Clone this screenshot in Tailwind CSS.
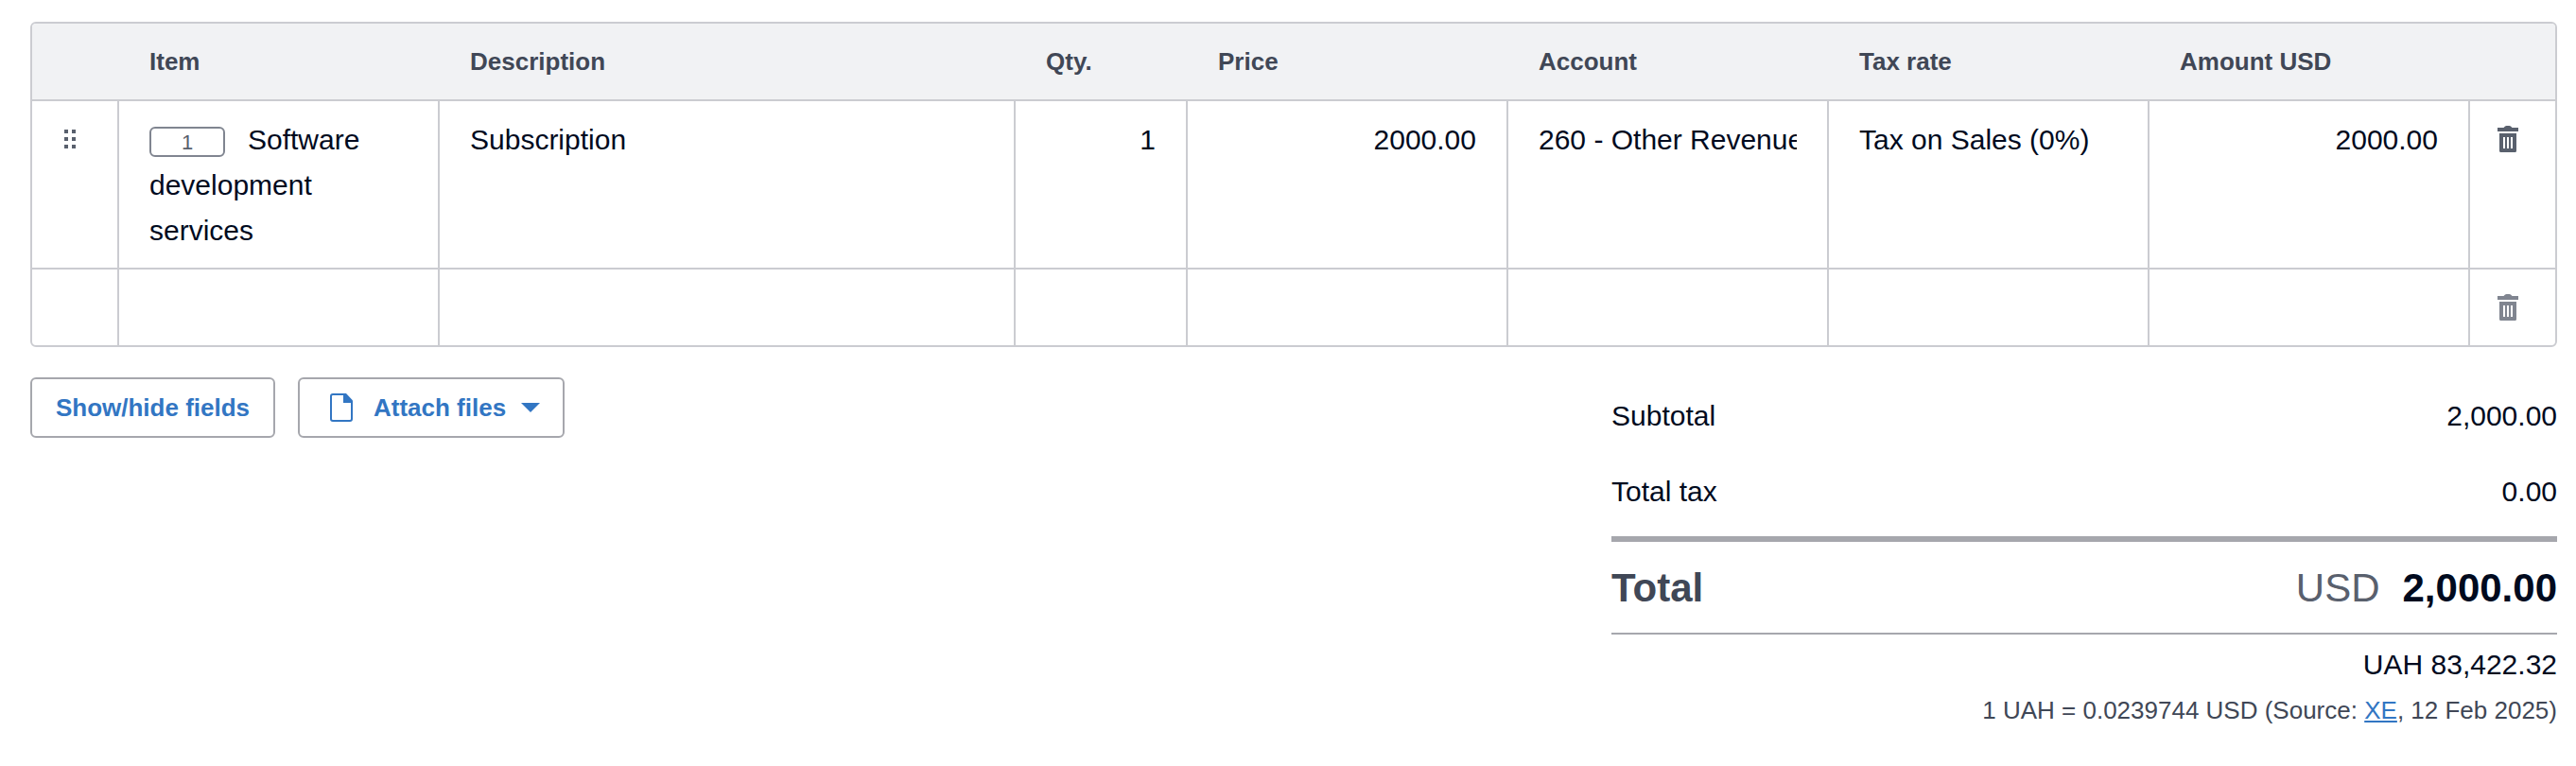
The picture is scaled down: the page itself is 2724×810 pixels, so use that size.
<!DOCTYPE html>
<html lang="en">
<head>
  <meta charset="UTF-8">
  <meta name="viewport" content="width=device-width, initial-scale=1.0">
  <title>Invoice line items</title>
  <script src="https://cdn.jsdelivr.net/npm/@tailwindcss/browser@4"></script>
</head>

<body class="bg-white pr-5 pl-8 pt-[23px] pb-6 font-['Liberation_Sans',Arial,sans-serif] text-[30px] leading-[48px] text-[#000a1e]">

  <!-- Line items -->
  <div class="overflow-hidden rounded-md border-2 border-[#cbccd1]">
    <table class="w-full table-fixed border-separate border-spacing-0">
      <colgroup>
        <col class="w-[92px]">
        <col class="w-[339px]">
        <col>
        <col class="w-[182px]">
        <col class="w-[339px]">
        <col class="w-[339px]">
        <col class="w-[339px]">
        <col class="w-[339px]">
        <col class="w-[90px]">
      </colgroup>
      <thead class="bg-[#f1f2f4] text-left text-[26px] text-[#404756]">
        <tr class="*:border-b-2 *:border-[#cbccd1] *:px-8 *:py-4 *:font-bold">
          <td></td>
          <th scope="col">Item</th>
          <th scope="col">Description</th>
          <th scope="col">Qty.</th>
          <th scope="col">Price</th>
          <th scope="col">Account</th>
          <th scope="col">Tax rate</th>
          <th scope="col">Amount USD</th>
          <td></td>
        </tr>
      </thead>
      <tbody>
        <tr class="align-top *:border-b-2 *:border-r-2 *:border-[#cbccd1] *:pt-[17px] *:pb-[15px]">
          <td>
            <button type="button" aria-label="Reorder line" class="flex h-[46px] w-full cursor-grab items-center justify-center pr-[10px]">
              <svg class="h-5 w-3 fill-[#59606d]" viewBox="0 0 12 20" shape-rendering="crispEdges">
                <path d="M0 0h4v4H0zM8 0h4v4H8zM0 8h4v4H0zM8 8h4v4H8zM0 16h4v4H0zM8 16h4v4H8z"/>
              </svg>
            </button>
          </td>
          <td class="px-8"><span class="mr-6 inline-block h-8 w-20 rounded-md border-2 border-[#808590] text-center align-middle text-[22px] leading-[30px] text-[#59606d]">1</span>Software development services</td>
          <td class="px-8">Subscription</td>
          <td class="px-8 text-right">1</td>
          <td class="px-8 text-right">2000.00</td>
          <td class="px-8"><div class="overflow-hidden whitespace-nowrap">260 - Other Revenue</div></td>
          <td class="px-8"><div class="overflow-hidden whitespace-nowrap">Tax on Sales (0%)</div></td>
          <td class="px-8 text-right">2000.00</td>
          <td class="border-r-0!">
            <button type="button" aria-label="Delete line" class="flex h-[46px] w-full items-center justify-center pr-[10px]">
              <svg class="h-7 w-[22px] fill-[#59606d]" viewBox="0 0 22 28">
                <path fill-rule="evenodd" d="M0 2h6.500q1.500-2 3-2h3q1.500 0 3 2H22v4H0zM2 8h18v18.500q0 1.500-1.500 1.500h-15Q2 28 2 26.500zM6 12v12h2V12zM10 12v12h2V12zM14 12v12h2V12z"/>
              </svg>
            </button>
          </td>
        </tr>
        <tr class="align-top *:border-r-2 *:border-[#cbccd1] *:py-[17px]">
          <td></td>
          <td></td>
          <td></td>
          <td></td>
          <td></td>
          <td></td>
          <td></td>
          <td></td>
          <td class="border-r-0!">
            <button type="button" aria-label="Delete line" disabled class="flex h-[46px] w-full items-center justify-center pr-[10px]">
              <svg class="h-7 w-[22px] fill-[#808590]" viewBox="0 0 22 28">
                <path fill-rule="evenodd" d="M0 2h6.500q1.500-2 3-2h3q1.500 0 3 2H22v4H0zM2 8h18v18.500q0 1.500-1.500 1.500h-15Q2 28 2 26.500zM6 12v12h2V12zM10 12v12h2V12zM14 12v12h2V12z"/>
              </svg>
            </button>
          </td>
        </tr>
      </tbody>
    </table>
  </div>

  <div class="mt-8 flex items-start justify-between gap-8">
    <!-- Actions -->
    <div class="flex gap-6 text-[26px] font-bold text-[#3276c3]">
      <button type="button" class="h-16 w-[259px] rounded-md border-2 border-[#a6a7ad] whitespace-nowrap">Show/hide fields</button>
      <button type="button" class="flex h-16 w-[282px] items-center rounded-md border-2 border-[#a6a7ad] pr-6 pl-8 whitespace-nowrap">
        <svg class="mr-[22px] h-[30px] w-6" viewBox="0 0 24 30">
          <path fill="none" stroke="currentColor" stroke-width="2" d="M16 1H3Q1 1 1 3v24q0 2 2 2h18q2 0 2-2V8"/>
          <path fill="currentColor" d="M14 0h3l7 7.500V10H14z"/>
        </svg>
        Attach files
        <svg class="ml-auto h-[10px] w-5 fill-current" viewBox="0 0 20 10">
          <path d="M0 0h20L10 10z"/>
        </svg>
      </button>
    </div>

    <!-- Totals -->
    <div class="w-[1000px]">
      <dl>
        <div class="flex justify-between pt-[17px] pb-[15px]">
          <dt>Subtotal</dt>
          <dd>2,000.00</dd>
        </div>
        <div class="flex justify-between pt-[17px] pb-[15px]">
          <dt>Total tax</dt>
          <dd>0.00</dd>
        </div>
        <div class="mt-2 flex justify-between border-t-6 border-b-2 border-[#a6a7ad] pt-[25px] pb-[23px] text-[42px] font-bold">
          <dt class="text-[#404756]">Total</dt>
          <dd class="flex gap-6"><span class="font-normal text-[#59606d]">USD</span>2,000.00</dd>
        </div>
      </dl>
      <p class="mt-2 text-right">UAH 83,422.32</p>
      <p class="text-right text-[26px] text-[#404756]">1 UAH = 0.0239744 USD (Source: <a href="#" class="text-[#3276c3] underline">XE</a>, 12 Feb 2025)</p>
    </div>
  </div>

</body>
</html>
